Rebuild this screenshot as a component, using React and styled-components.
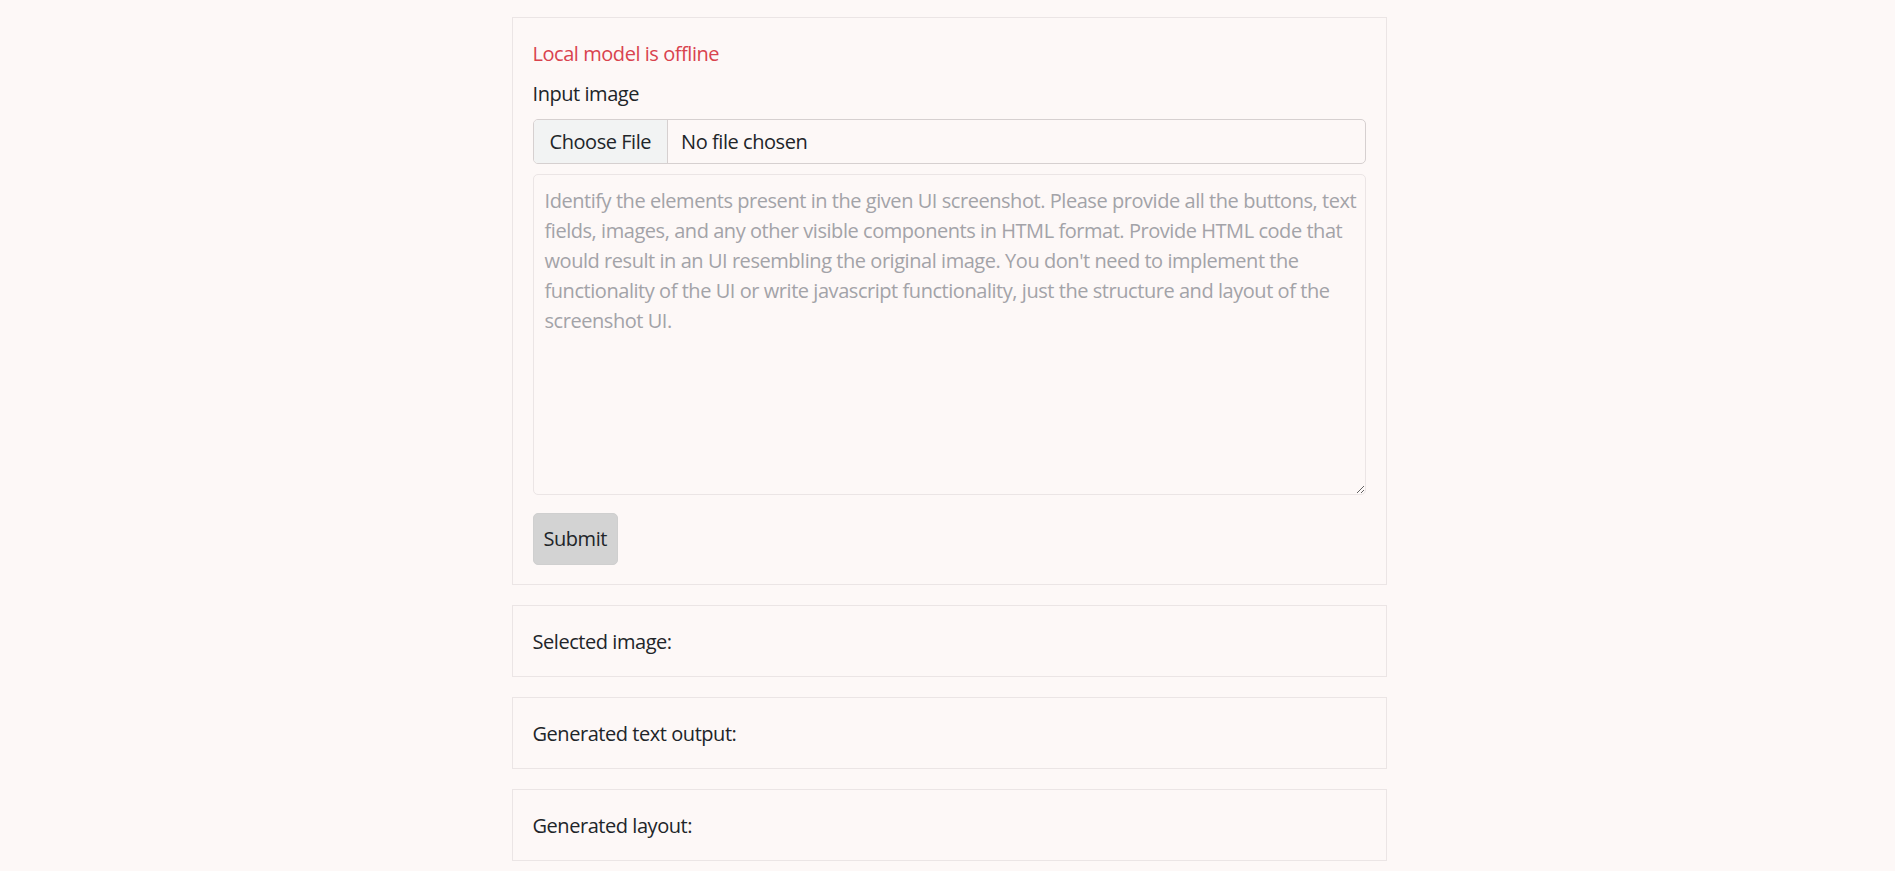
import React from "react";
import styled, { createGlobalStyle } from "styled-components";

const GlobalStyle = createGlobalStyle`
  body {
    margin: 0;
    background: #fdf8f7;
    font-family: "Open Sans", "Noto Sans", sans-serif;
    letter-spacing: -0.45px;
    color: #212529;
  }
`;

const Page = styled.div`
  min-height: 100vh;
  box-sizing: border-box;
  padding: 17px 0 0 3px;
`;

const Column = styled.div`
  width: 875px;
  margin: 0 auto;
  display: flex;
  flex-direction: column;
  gap: 20px;
`;

const Card = styled.section`
  box-sizing: border-box;
  border: 1px solid #ebe5e5;
  padding: 21px 20px 19px;
  display: flex;
  flex-direction: column;
  gap: 10px;
  font-size: 20px;
  line-height: 30px;
`;

const Status = styled.div`
  color: #d9434e;
`;

const Label = styled.label`
  display: block;
`;

const FileBox = styled.label`
  display: flex;
  align-items: stretch;
  height: 45px;
  box-sizing: border-box;
  border: 1px solid #d6d0d0;
  border-radius: 5px;
  overflow: hidden;
  cursor: pointer;

  input {
    display: none;
  }
`;

const FileButton = styled.span`
  display: flex;
  align-items: center;
  padding: 0 16px;
  background: #f2f3f3;
  border-right: 1px solid #d6d0d0;
`;

const FileName = styled.span`
  display: flex;
  align-items: center;
  padding: 0 13px;
`;

const Prompt = styled.textarea`
  display: block;
  box-sizing: border-box;
  width: 100%;
  height: 321px;
  margin: 0;
  padding: 11px 4px 9px 11px;
  border: 1px solid #ebe5e5;
  border-radius: 5px;
  background: transparent;
  font: inherit;
  letter-spacing: inherit;
  color: #212529;

  &::placeholder {
    color: #a3a3a8;
  }
`;

const Submit = styled.button`
  align-self: flex-start;
  margin-top: 8px;
  padding: 10px;
  border: 1px solid #cfcfcf;
  border-radius: 5px;
  background: #d3d3d3;
  font: inherit;
  letter-spacing: inherit;
  color: #212529;
`;

const placeholder =
  "Identify the elements present in the given UI screenshot. Please provide all the buttons, text fields, images, and any other visible components in HTML format. Provide HTML code that would result in an UI resembling the original image. You don't need to implement the functionality of the UI or write javascript functionality, just the structure and layout of the screenshot UI.";

const App = () => {
  return (
    <Page>
      <GlobalStyle />
      <Column>
        <Card>
          <Status>Local model is offline</Status>
          <Label htmlFor="image">Input image</Label>
          <FileBox>
            <input id="image" type="file" accept="image/*" />
            <FileButton>Choose File</FileButton>
            <FileName>No file chosen</FileName>
          </FileBox>
          <Prompt placeholder={placeholder} />
          <Submit type="button">Submit</Submit>
        </Card>
        <Card>Selected image:</Card>
        <Card>Generated text output:</Card>
        <Card>Generated layout:</Card>
      </Column>
    </Page>
  );
};

export default App;
